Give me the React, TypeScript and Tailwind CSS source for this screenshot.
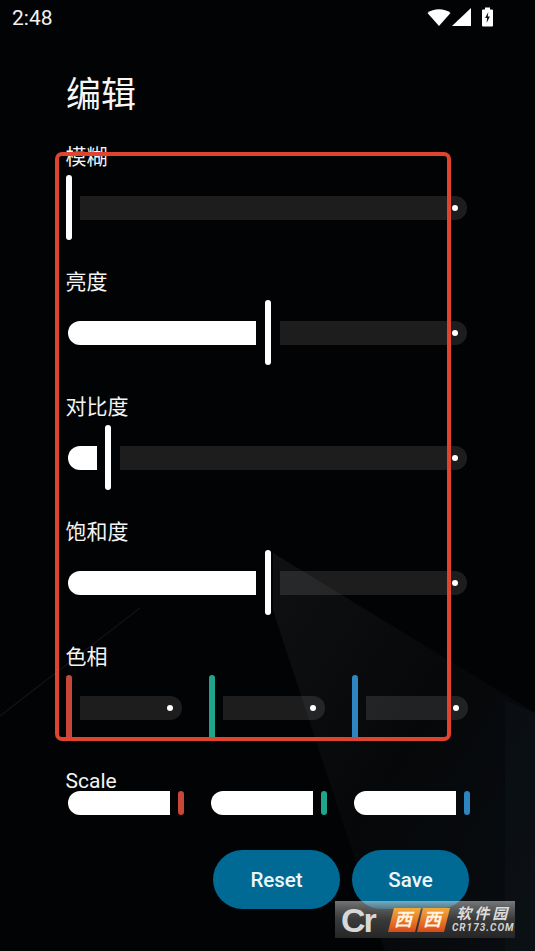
import React from "react";

function Track({ className }: { className: string }) {
  return (
    <div className={`relative h-6 rounded-l-[4px] rounded-r-full bg-white/[0.105] ${className}`}>
      <span className="absolute right-[9px] top-[9px] h-[6px] w-[6px] rounded-full bg-white" />
    </div>
  );
}

function Thumb({ color = "bg-white", h = "h-[65px]" }: { color?: string; h?: string }) {
  return <div className={`w-[6px] shrink-0 rounded-full ${h} ${color}`} />;
}

function Active({ w }: { w: string }) {
  return <div className={`h-6 shrink-0 rounded-l-full rounded-r-[4px] bg-white ${w}`} />;
}

function Label({ children, mb = "mb-2" }: { children: React.ReactNode; mb?: string }) {
  return <div className={`-ml-[0.5px] h-5 text-[21px] leading-[21px] text-[#f4f4f4] ${mb}`}>{children}</div>;
}

function Section({ label, active, gap, trackW }: { label: string; active: string; gap: string; trackW: string }) {
  return (
    <div className="mb-8">
      <Label>{label}</Label>
      <div className="flex h-[65px] items-center pl-[2px]">
        <Active w={active} />
        <div className={`flex items-center gap-[9px] ${gap}`}>
          <Thumb />
          <Track className={trackW} />
        </div>
      </div>
    </div>
  );
}

function Tile({ children }: { children: React.ReactNode }) {
  return (
    <span className="flex h-[24px] w-[27px] skew-x-[-14deg] items-center justify-center bg-gradient-to-b from-[#f2a83c] to-[#d8481a] text-[18px] font-bold leading-none text-[#fff3e0]">
      {children}
    </span>
  );
}

export default function App() {
  return (
    <div className="relative h-[951px] w-[535px] overflow-hidden bg-[#020304] font-['Roboto','Noto_Sans_CJK_SC',sans-serif] text-white">
      <svg className="absolute inset-0" width="535" height="951" viewBox="0 0 535 951">
        <defs>
          <linearGradient id="a" x1="0" y1="0" x2="1" y2="1">
            <stop offset="0" stopColor="#101214" stopOpacity="0.9" />
            <stop offset="0.5" stopColor="#06080a" stopOpacity="0.9" />
            <stop offset="1" stopColor="#0a0e12" stopOpacity="0.9" />
          </linearGradient>
        </defs>
        <polygon points="273,553 535,713 535,951 385,951 273,610" fill="url(#a)" />
        <polygon points="505,700 535,713 535,951 505,951" fill="#0e1319" opacity="0.5" />
        <line x1="0" y1="716" x2="140" y2="608" stroke="#101214" strokeWidth="1.5" />
      </svg>

      <div className="relative">
        <div className="flex h-9 items-start justify-between pl-3 pr-[42px]">
          <span className="mt-[8px] text-[21px] leading-5 text-[#f2f2f2]">2:48</span>
          <div className="mt-[7px] flex items-end">
            <svg width="24" height="18" viewBox="0 0 24 18" className="mb-px">
              <path d="M0.5 5 C 6.5 0 17.5 0 23.5 5 L12 18 Z" fill="#fff" />
            </svg>
            <svg width="19" height="18" viewBox="0 0 19 18" className="mb-px ml-px">
              <polygon points="19,0 19,18 0,18" fill="#fff" />
            </svg>
            <svg width="11" height="20" viewBox="0 0 11 20" className="ml-[11px]">
              <path d="M3 0.5h5v2h2a1 1 0 0 1 1 1v15a1 1 0 0 1-1 1h-9a1 1 0 0 1-1-1v-15a1 1 0 0 1 1-1h2z" fill="#fff" />
              <path d="M6.3 5 L3.1 11 H5.1 L4.6 16 L7.9 9.6 H5.8 Z" fill="#111" />
            </svg>
          </div>
        </div>

        <div className="pl-[66px]">
          <h1 className="mt-[36px] h-[75px] text-[35px] font-normal leading-[48px] text-[#f6f6f6]">编辑</h1>

          <div className="mb-8">
            <Label>模糊</Label>
            <div className="flex h-[65px] items-center gap-2">
              <Thumb />
              <Track className="w-[387px]" />
            </div>
          </div>
          <Section label="亮度" active="w-[188px]" gap="ml-[9px]" trackW="w-[187px]" />
          <Section label="对比度" active="w-[29px]" gap="ml-[8px]" trackW="w-[347px]" />
          <Section label="饱和度" active="w-[188px]" gap="ml-[9px]" trackW="w-[187px]" />

          <div className="mb-[31px]">
            <Label>色相</Label>
            <div className="flex h-[65px] items-center gap-[27.5px]">
              {["bg-[#c8473b]", "bg-[#1ea58c]", "bg-[#2e86c1]"].map((c) => (
                <div key={c} className="flex items-center gap-2">
                  <Thumb color={c} />
                  <Track className="w-[101.5px]" />
                </div>
              ))}
            </div>
          </div>

          <Label mb="mb-0">Scale</Label>
          <div className="flex items-center gap-[27px] pl-[2px]">
            {["bg-[#c8473b]", "bg-[#1ea58c]", "bg-[#2e86c1]"].map((c) => (
              <div key={c} className="flex items-center gap-2">
                <Active w="w-[102px]" />
                <Thumb color={c} h="h-6" />
              </div>
            ))}
          </div>

          <div className="mt-[35px] flex justify-end gap-3 pr-[66px]">
            <button className="h-[59px] w-[127px] rounded-full bg-[#006a94] pt-px text-[20.5px] font-medium text-[#eef6fa]">Reset</button>
            <button className="h-[59px] w-[117px] rounded-full bg-[#006a94] pt-px text-[20.5px] font-medium text-[#eef6fa]">Save</button>
          </div>
        </div>
      </div>

      {/* annotation frame */}
      <div className="absolute left-[55px] top-[152px] h-[589px] w-[396px] rounded-[7px] border-[4px] border-[#e0442e]" />

      {/* watermark */}
      <div className="absolute left-[335px] top-[901px] flex h-[37px] w-[180px] items-center overflow-hidden bg-gradient-to-b from-[#ffffff]/45 via-[#3a3a3a] to-[#262626] pl-[6px]">
        <span className="w-[50px] font-['Liberation_Sans',sans-serif] text-[34px] font-bold leading-[36px] tracking-[-2px] text-[#d8d8d8]">Cr</span>
        <div className="flex gap-[2px]">
          <Tile>西</Tile>
          <Tile>西</Tile>
        </div>
        <div className="ml-[5px] flex flex-col items-center italic">
          <span className="text-[15px] font-bold leading-[17px] tracking-[3px] text-[#dcdcdc]">软件园</span>
          <span className="text-[10px] font-bold leading-[10px] tracking-[1px] text-[#d4d4d4]">CR173.COM</span>
        </div>
      </div>
    </div>
  );
}
